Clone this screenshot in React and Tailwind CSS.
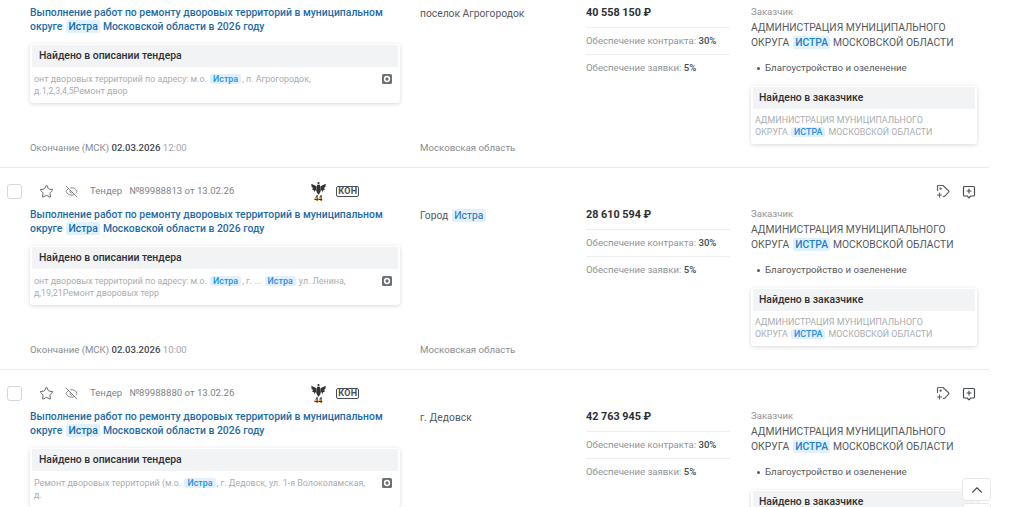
import React from 'react';
import { Star, EyeOff, ChevronUp } from 'lucide-react';

const rows = [
  {
    number: '89988812',
    place: 'поселок Агрогородок',
    price: '40 558 150 ₽',
    date: '12:00',
    snippet: (
      <>
        онт дворовых территорий по адресу: м.о. <Snip>Истра</Snip>, п. Агрогородок, д.1,2,3,4,5Ремонт двор
      </>
    ),
  },
  {
    number: '89988813',
    place: 'Город',
    placeMark: 'Истра',
    price: '28 610 594 ₽',
    date: '10:00',
    snippet: (
      <>
        онт дворовых территорий по адресу: м.о. <Snip>Истра</Snip>, г. ... <Snip>Истра</Snip> ул. Ленина, д,19,21Ремонт дворовых терр
      </>
    ),
  },
  {
    number: '89988880',
    place: 'г. Дедовск',
    price: '42 763 945 ₽',
    date: '10:00',
    snippet: (
      <>
        Ремонт дворовых территорий (м.о. <Snip>Истра</Snip>, г. Дедовск, ул. 1-я Волоколамская, д.
      </>
    ),
  },
];

function Mark({ children }) {
  return <span className="bg-[#e0f1fd] px-[2.5px] ml-[1px] rounded-[2px]">{children}</span>;
}

function Snip({ children }) {
  return <span className="bg-[#e0f1fd] text-[#2b8fdc] font-medium px-[3px] mx-[1px] rounded-[2px]">{children}</span>;
}

// иконка тега с плюсом
const TagPlusIcon = () => (
  <svg width="14" height="15" viewBox="0 0 14 15" fill="none" stroke="#5f6368" strokeWidth="1.2" strokeLinecap="round" strokeLinejoin="round">
    <path d="M1.5 6.5V2.5a1 1 0 0 1 1-1H7l5.6 5.3a1 1 0 0 1 0 1.4L8.6 12.300a1 1 0 0 1-1.3 0" />
    <circle cx="4.6" cy="4.6" r="0.6" fill="#5f6368" />
    <path d="M3.500 9v4M1.500 11h4" />
  </svg>
);

// сообщение с плюсом, хвост снизу по центру
const NotePlusIcon = () => (
  <svg width="14" height="14" viewBox="0 0 14 14" fill="none" stroke="#4b4f54" strokeWidth="1.2" strokeLinecap="round" strokeLinejoin="round">
    <path d="M2.500 1.500h9a1 1 0 0 1 1 1v7.500a1 1 0 0 1-1 1H8.800L7 12.800 5.200 11H2.500a1 1 0 0 1-1-1V2.500a1 1 0 0 1 1-1z" />
    <path d="M7 4v4M5 6h4" />
  </svg>
);

const SnippetIcon = () => (
  <svg width="10" height="10" viewBox="0 0 10 10" className="shrink-0">
    <rect width="10" height="10" rx="1.5" fill="#6b7075" />
    <circle cx="5" cy="5" r="2.4" fill="none" stroke="#fff" strokeWidth="1.5" />
  </svg>
);

// герб 44-ФЗ
const Eagle = () => (
  <div className="flex flex-col items-center w-[16px] leading-none">
    <svg width="15" height="13" viewBox="0 0 15 13" fill="#2f3337">
      <circle cx="7.5" cy="1.1" r="1.1" />
      <path d="M6 2.800h3l.5 7L7.500 13l-2-3.200z" />
      <path d="M0.300 1.800 5.500 4.300 5.700 9 4 8.300l-.3 2.200-1-2.600L1.300 8l.6-2.200L.6 5z" />
      <path d="M14.700 1.800 9.500 4.300 9.300 9 11 8.300l.3 2.200 1-2.600 1.400.1-.6-2.200 1.300-.8z" />
    </svg>
    <span className="font-['Liberation_Serif',serif] font-bold text-[8px] leading-[7px] text-[#2f3337]">44</span>
  </div>
);

const Row = ({ row }) => (
  <div className="h-[202px] border-b border-[#e9ebed] flex flex-col shrink-0">
    <div className="h-[46px] flex items-center pl-[7px] pt-[1px]">
      <div className="w-[15px] h-[15px] border border-[#d5d8db] rounded-[3px] bg-white"></div>
      <Star size={15} strokeWidth={1.4} className="ml-[17px] text-[#4b4f54]" />
      <EyeOff size={13} strokeWidth={1.4} className="ml-[11px] text-[#5f6368]" />
      <span className="ml-[12px] text-[9.6px] text-[#7d8388]">Тендер</span>
      <span className="ml-[7px] text-[9.6px] text-[#7d8388]">№{row.number} от 13.02.26</span>
      <div className="ml-[76px]"><Eagle /></div>
      <span className="ml-[10px] border border-[#4b4f54] rounded-[2px] px-[1px] h-[11px] flex items-center text-[9px] font-bold text-[#4b4f54] tracking-[0.3px]">КОН</span>
      <div className="ml-auto flex items-center gap-[12px] mr-[13px]">
        <TagPlusIcon />
        <NotePlusIcon />
      </div>
    </div>
    <div className="flex-1 min-h-0 grid grid-cols-[390px_166px_165px_226px] pl-[30px] pb-[13px]">
      <div className="flex flex-col min-h-0 pr-[20px]">
        <div className="text-[10.4px] leading-[14px] font-medium text-[#1f6ba5] -mt-[6px]">
          Выполнение работ по ремонту дворовых территорий в муниципальном округе <Mark>Истра</Mark> Московской области в 2026 году
        </div>
        <div className="mt-[10px] rounded-[3px] bg-white shadow-[0_1px_4px_rgba(0,0,0,0.16)] px-[2px] pt-[1px] pb-[6px]">
          <div className="h-[22px] bg-[#f1f3f5] flex items-center pl-[7px] text-[10.4px] font-medium text-[#2c3034]">Найдено в описании тендера</div>
          <div className="flex items-start justify-between pl-[2px] pr-[6px] mt-[6px]">
            <p className="w-[335px] text-[8.9px] leading-[12px] text-[#a9adb1]">{row.snippet}</p>
            <div className="mt-[1px]"><SnippetIcon /></div>
          </div>
        </div>
        <div className="mt-auto text-[9.6px] leading-[12px] text-[#868b90]">
          Окончание (МСК) <span className="font-medium text-[#44484c]">02.03.2026</span> <span className="text-[#a0a4a8]">{row.date}</span>
        </div>
      </div>
      <div className="flex flex-col">
        <div className="text-[10.3px] leading-[14px] text-[#55595d] -mt-[5px]">
          {row.place} {row.placeMark && <Mark><span className="text-[#1f6ba5]">{row.placeMark}</span></Mark>}
        </div>
        <div className="mt-auto text-[9.7px] leading-[12px] text-[#868b90]">Московская область</div>
      </div>
      <div className="w-[144px] text-[9.6px]">
        <div className="h-[22px] -mt-[6px] border-b border-[#eceef0] text-[10.8px] font-bold text-[#2c3034] leading-[14px]">{row.price}</div>
        <div className="h-[27px] border-b border-[#eceef0] flex items-center text-[#8f9498]">
          Обеспечение контракта:&nbsp;<span className="font-medium text-[#44484c]">30%</span>
        </div>
        <div className="h-[27px] flex items-center text-[#8f9498]">
          Обеспечение заявки:&nbsp;<span className="font-medium text-[#44484c]">5%</span>
        </div>
      </div>
      <div className="-mt-[6px]">
        <div className="text-[9.6px] leading-[12px] text-[#8f9498]">Заказчик</div>
        <div className="text-[10.3px] leading-[15px] text-[#55595d] mt-[2px]">
          АДМИНИСТРАЦИЯ МУНИЦИПАЛЬНОГО ОКРУГА <Mark><span className="font-medium text-[#1f7fc9]">ИСТРА</span></Mark> МОСКОВСКОЙ ОБЛАСТИ
        </div>
        <div className="flex items-center mt-[12px] pl-[6px] text-[9.7px] leading-[12px] text-[#55595d]">
          <span className="w-[3px] h-[3px] rounded-full bg-[#55595d] mr-[5px]"></span>
          Благоустройство и озеленение
        </div>
        <div className="mt-[12px] rounded-[3px] bg-white shadow-[0_1px_4px_rgba(0,0,0,0.16)] px-[2px] pt-[1px] pb-[6px]">
          <div className="h-[22px] bg-[#f1f3f5] flex items-center pl-[6px] text-[10.4px] font-medium text-[#2c3034]">Найдено в заказчике</div>
          <p className="mt-[5px] pl-[2px] text-[8.9px] leading-[12px] text-[#a9adb1]">
            АДМИНИСТРАЦИЯ МУНИЦИПАЛЬНОГО<br />ОКРУГА <Snip>ИСТРА</Snip> МОСКОВСКОЙ ОБЛАСТИ
          </p>
        </div>
      </div>
    </div>
  </div>
);

export default function App() {
  return (
    <div className="relative w-[1024px] h-[507px] overflow-hidden bg-white font-['Roboto',sans-serif]">
      <div className="w-[989px] -mt-[34px]">
        {rows.map((row) => (
          <Row key={row.number} row={row} />
        ))}
      </div>
      {/* кнопки прокрутки */}
      <div className="absolute left-[962px] top-[478px] w-[29px] h-[23px] bg-white border border-[#e6e8ea] rounded-[4px] flex items-center justify-center">
        <ChevronUp size={18} strokeWidth={1.5} className="text-[#4b4f54]" />
      </div>
      <div className="absolute left-[962px] top-[503px] w-[29px] h-[23px] bg-white border border-[#e6e8ea] rounded-[4px]"></div>
    </div>
  );
}
